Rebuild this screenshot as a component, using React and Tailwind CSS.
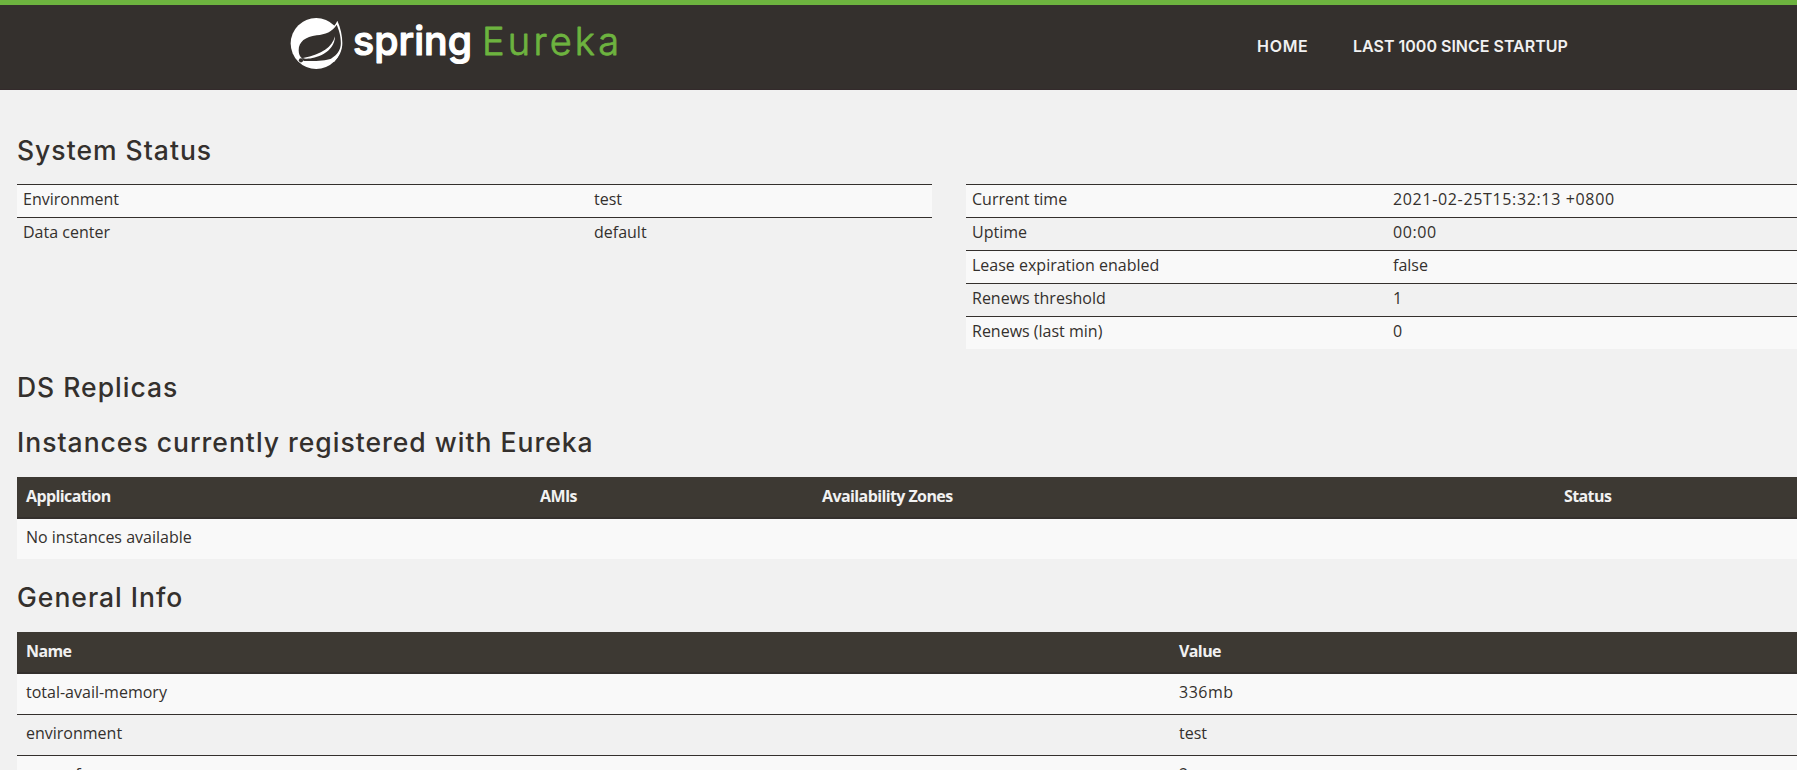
const statusRows = [
  ["Environment", "test"],
  ["Data center", "default"],
];
const runtimeRows = [
  ["Current time", "2021-02-25T15:32:13 +0800", "tracking-[0.65px]"],
  ["Uptime", "00:00", "tracking-[0.6px]"],
  ["Lease expiration enabled", "false"],
  ["Renews threshold", "1"],
  ["Renews (last min)", "0", "tracking-normal"],
];
const infoRows = [
  ["total-avail-memory", "336mb", "tracking-[0.5px]"],
  ["environment", "test"],
  ["num-of-cpus", "2"],
];

function Logo() {
  return (
    <svg className="block h-[60px] w-[350px]" viewBox="0 0 350 60" aria-label="spring Eureka">
      <g transform="translate(-20 -13) scale(.33333)">
        <circle cx="138.500" cy="130.500" r="76.500" fill="#fff" />
        <path d="M180 88C190 82 197 74 202 62C212 84 217 108 217 130C217 151 208 170 192 186L138 150Z" fill="#fff" />
        <path d="M200 74C187 96 166 103 140 106C106 110 86 126 86 151C86 163 90 171 96 175C100 180 100 183 102 183C137 184 167 182 183 176C203 164 212.500 149 212.500 130C212.500 106 207 91 200 74Z" fill="#34302d" />
        <circle cx="93" cy="181" r="6.500" fill="#34302d" />
        <path d="M195 109C186 142 157 163 99 174C108 182 194 170 195 109Z" fill="#fff" />
      </g>
      <g fontFamily="Inter, sans-serif" strokeLinejoin="round">
        <text x="63" y="42" fontSize="40.500" fontWeight="500" fill="#fff" stroke="#fff" strokeWidth="1.200" textLength="119" lengthAdjust="spacingAndGlyphs">spring</text>
        <text x="192" y="41.800" fontSize="38" fontWeight="300" fill="#6db33f" stroke="#6db33f" strokeWidth=".8" textLength="137">Eureka</text>
      </g>
    </svg>
  );
}

function Heading({ children }) {
  return <h1 className="h-[30px] text-[26.5px] leading-[28px] font-medium tracking-[1px] whitespace-nowrap">{children}</h1>;
}

function CondensedTable({ rows, labelWidth }) {
  return (
    <div>
      {rows.map(([k, v, tracking]) => (
        <div key={k} className="flex h-[33px] border-t border-[#34302d] pl-[6px] leading-[28px] odd:bg-[#f9f9f9]">
          <div className={labelWidth}>{k}</div>
          <div className={tracking}>{v}</div>
        </div>
      ))}
    </div>
  );
}

function HeadRow({ children }) {
  return (
    <div className="flex h-[42px] border-b-2 border-[#34302d] bg-[#3d3933] pl-[9px] leading-[38px] font-bold tracking-[-0.6px] text-[#f1f1f1]">
      {children}
    </div>
  );
}

export default function App() {
  return (
    <div className="h-[770px] w-full overflow-hidden bg-[#f1f1f1] font-['Open_Sans',sans-serif] text-base text-[#34302d]">
      <header className="flex h-[90px] border-t-5 border-b border-t-[#6db33f] border-b-[#332a2b] bg-[#34302d] pl-[290px]">
        <div className="w-[967px] pt-2"><Logo /></div>
        <nav className="flex pt-[29px] font-['Inter',sans-serif] text-[16px] leading-[24px] font-semibold whitespace-nowrap text-[#f1f1f1]">
          <span className="w-[96px] tracking-[0.7px]">HOME</span>
          <span>LAST 1000 SINCE STARTUP</span>
        </nav>
      </header>
      <main className="pl-[17px] font-['Open_Sans',sans-serif]">
        <div className="pt-[46px] pb-[18px] font-['Inter',sans-serif]"><Heading>System Status</Heading></div>
        <div className="flex gap-[34px]">
          <div className="w-[915px]"><CondensedTable rows={statusRows} labelWidth="w-[571px]" /></div>
          <div className="flex-1"><CondensedTable rows={runtimeRows} labelWidth="w-[421px]" /></div>
        </div>
        <div className="flex flex-col gap-[25px] pt-[24px] pb-[19px] font-['Inter',sans-serif]">
          <Heading>DS Replicas</Heading>
          <Heading>Instances currently registered with Eureka</Heading>
        </div>
        <section>
          <HeadRow>
            <div className="w-[514px]">Application</div>
            <div className="w-[282px]">AMIs</div>
            <div className="w-[742px]">Availability Zones</div>
            <div>Status</div>
          </HeadRow>
          <div className="h-[40px] bg-[#f9f9f9] pl-[9px] leading-[36px]">No instances available</div>
        </section>
        <div className="pt-[24px] pb-[19px] font-['Inter',sans-serif]"><Heading>General Info</Heading></div>
        <section>
          <HeadRow>
            <div className="w-[1153px]">Name</div>
            <div>Value</div>
          </HeadRow>
          {infoRows.map(([k, v, tracking]) => (
            <div key={k} className="flex h-[41px] border-b border-[#34302d] pl-[9px] leading-[37px] even:bg-[#f9f9f9]">
              <div className="w-[1153px]">{k}</div>
              <div className={tracking}>{v}</div>
            </div>
          ))}
        </section>
      </main>
    </div>
  );
}
